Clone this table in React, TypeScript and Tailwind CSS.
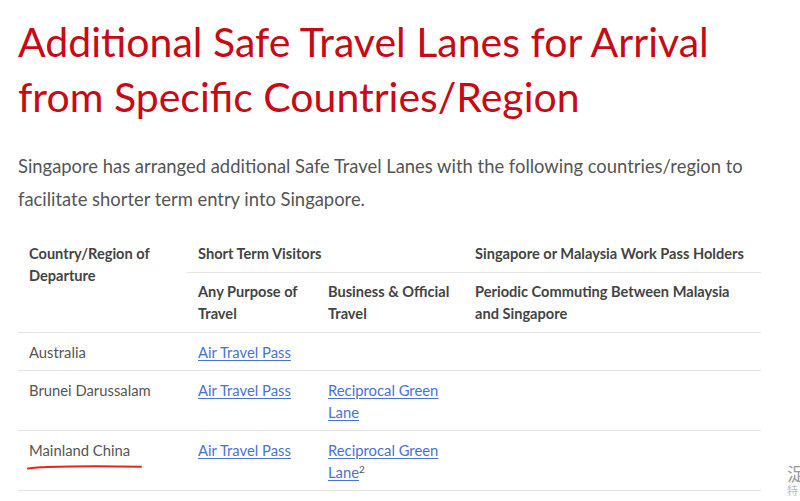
const th = "px-[11px] py-[7.5px] text-left align-top font-bold text-[14.6px] leading-[22px] text-[#444]";
const td = "px-[11px] py-[7.5px] align-top text-[14.8px] leading-[22px] text-[#555]";
const link = "text-[#4a73d1] underline underline-offset-2";

export default function App() {
  return (
    <div className="relative h-[501px] w-[800px] overflow-hidden bg-white" style={{ fontFamily: "Lato, 'Noto Sans', sans-serif" }}>
      <div className="px-[18px] pt-[14px]">
        <h1 className="text-[41px] leading-[55px] text-[#c80a14]">
          Additional Safe Travel Lanes for Arrival
          <br />
          from Specific Countries/Region
        </h1>

        <p className="mt-[26px] text-[18.4px] leading-[33px] text-[#555]">
          Singapore has arranged additional Safe Travel Lanes with the following countries/region to facilitate shorter term entry into Singapore.
        </p>

        <table className="mt-[19px] w-[743px] table-fixed border-collapse">
          <colgroup>
            <col className="w-[169px]" />
            <col className="w-[130px]" />
            <col className="w-[147px]" />
            <col className="w-[297px]" />
          </colgroup>
          <thead>
            <tr>
              <th rowSpan={2} className={th + " border-b border-[#e3e3e3]"}>Country/Region of Departure</th>
              <th colSpan={2} className={th + " border-b border-[#e3e3e3]"}>Short Term Visitors</th>
              <th className={th + " border-b border-[#e3e3e3]"}>Singapore or Malaysia Work Pass Holders</th>
            </tr>
            <tr className="border-b border-[#e3e3e3]">
              <th className={th}>Any Purpose of Travel</th>
              <th className={th}>Business &amp; Official Travel</th>
              <th className={th}>Periodic Commuting Between Malaysia and Singapore</th>
            </tr>
          </thead>
          <tbody>
            <tr className="border-b border-[#e3e3e3]">
              <td className={td}>Australia</td>
              <td className={td}><a className={link}>Air Travel Pass</a></td>
              <td className={td}></td>
              <td className={td}></td>
            </tr>
            <tr className="border-b border-[#e3e3e3]">
              <td className={td}>Brunei Darussalam</td>
              <td className={td}><a className={link}>Air Travel Pass</a></td>
              <td className={td}><a className={link}>Reciprocal Green Lane</a></td>
              <td className={td}></td>
            </tr>
            <tr className="border-b border-[#e3e3e3]">
              <td className={td + " relative"}>
                Mainland China
                <svg className="absolute left-[9px] top-[33px]" width="116" height="6" viewBox="0 0 116 6">
                  <path d="M1 4.5 C 10 3, 14 3.5, 20 3 C 50 2, 90 2.2, 114 2.8" stroke="#e8231c" strokeWidth="2" fill="none" strokeLinecap="round" />
                </svg>
              </td>
              <td className={td}><a className={link}>Air Travel Pass</a></td>
              <td className={td}>
                <a className={link}>Reciprocal Green Lane</a>
                <sup className="text-[10px]">2</sup>
              </td>
              <td className={td}></td>
            </tr>
          </tbody>
        </table>
      </div>
      <div className="absolute left-[787px] top-[463px] text-[18px] leading-[20px] text-[#9a9a9a]" style={{ fontFamily: "'Noto Sans CJK SC', sans-serif" }}>
        浞
        <div className="text-[11px] leading-[14px] text-[#bbb]">特</div>
      </div>
    </div>
  );
}
